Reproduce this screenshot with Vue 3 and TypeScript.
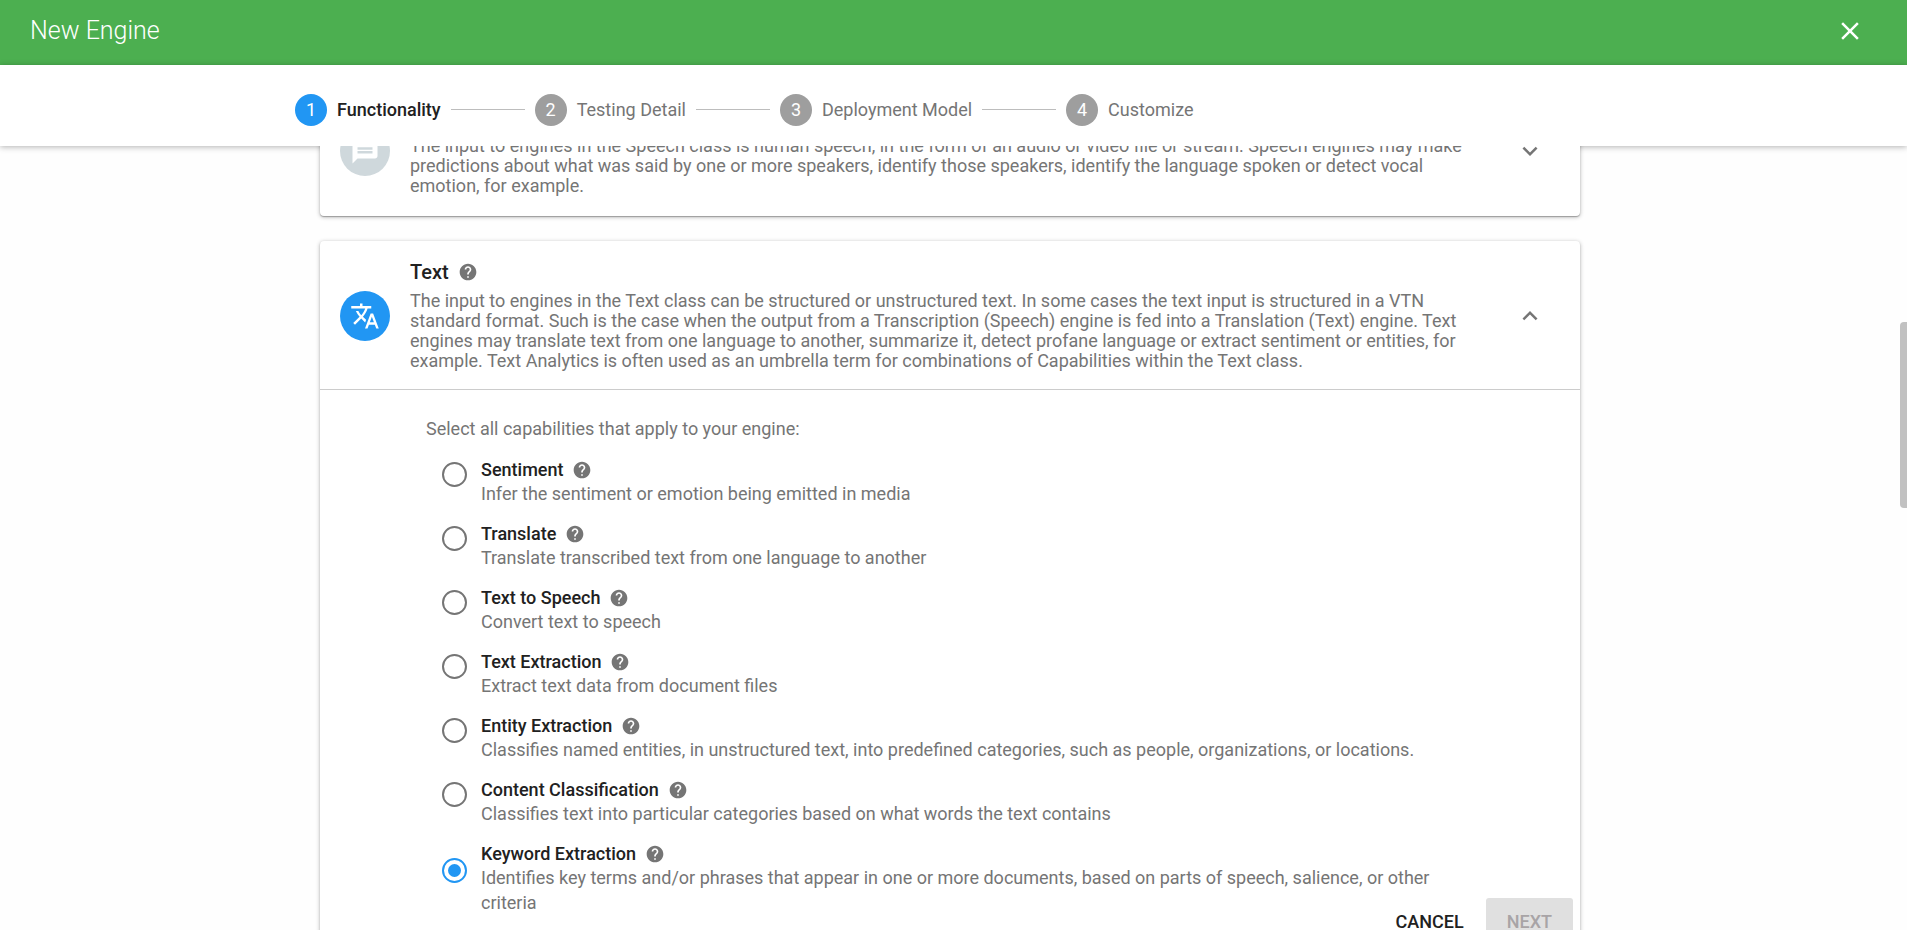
<script setup lang="ts">
import { onMounted, ref } from 'vue'

interface Capability {
  id: string
  name: string
  description: string
}

const steps: string[] = ['Functionality', 'Testing Detail', 'Deployment Model', 'Customize']
const activeStep = 0

const capabilities: Capability[] = [
  { id: 'sentiment', name: 'Sentiment', description: 'Infer the sentiment or emotion being emitted in media' },
  { id: 'translate', name: 'Translate', description: 'Translate transcribed text from one language to another' },
  { id: 'tts', name: 'Text to Speech', description: 'Convert text to speech' },
  { id: 'text-extraction', name: 'Text Extraction', description: 'Extract text data from document files' },
  {
    id: 'entity-extraction',
    name: 'Entity Extraction',
    description:
      'Classifies named entities, in unstructured text, into predefined categories, such as people, organizations, or locations.',
  },
  {
    id: 'content-classification',
    name: 'Content Classification',
    description: 'Classifies text into particular categories based on what words the text contains',
  },
  {
    id: 'keyword-extraction',
    name: 'Keyword Extraction',
    description:
      'Identifies key terms and/or phrases that appear in one or more documents, based on parts of speech, salience, or other criteria',
  },
]

const selected = ref('keyword-extraction')
const scroller = ref<HTMLElement | null>(null)

const helpPath =
  'M12 2C6.48 2 2 6.48 2 12s4.48 10 10 10 10-4.48 10-10S17.52 2 12 2zm1 17h-2v-2h2v2zm2.07-7.75l-.9.92C13.45 12.9 13 13.5 13 15h-2v-.5c0-1.1.45-2.1 1.17-2.83l1.24-1.26c.37-.36.59-.86.59-1.41 0-1.1-.9-2-2-2s-2 .9-2 2H8c0-2.21 1.79-4 4-4s4 1.79 4 4c0 .88-.36 1.68-.93 2.25z'

onMounted(() => {
  if (scroller.value) scroller.value.scrollTop = 60
})
</script>

<template>
  <div class="page">
    <header class="topbar">
      <h1>New Engine</h1>
      <button type="button" class="icon-btn close" aria-label="Close">
        <svg viewBox="0 0 24 24" width="30" height="30"><path d="M19 6.41L17.59 5 12 10.59 6.41 5 5 6.41 10.59 12 5 17.59 6.41 19 12 13.41 17.59 19 19 17.59 13.41 12z" /></svg>
      </button>
    </header>

    <nav class="stepper" aria-label="Progress">
      <ol>
        <li v-for="(step, i) in steps" :key="step" :class="{ active: i === activeStep }">
          <span class="num">{{ i + 1 }}</span>
          <span class="step-label">{{ step }}</span>
        </li>
      </ol>
    </nav>

    <main class="body">
      <div ref="scroller" class="scroller">
        <div class="cards">
          <section class="card">
            <div class="card-head collapsed">
              <span class="avatar muted">
                <svg viewBox="0 0 24 24" width="30" height="30"><path d="M20 2H4c-1.1 0-2 .9-2 2v18l4-4h14c1.1 0 2-.9 2-2V4c0-1.1-.9-2-2-2zm-2 12H6v-2h12v2zm0-3H6V9h12v2zm0-3H6V6h12v2z" /></svg>
              </span>
              <div class="summary">
                <div class="title-row">
                  <h2>Speech</h2>
                  <button type="button" class="icon-btn" aria-label="About Speech">
                    <svg viewBox="0 0 24 24" width="20" height="20"><path :d="helpPath" /></svg>
                  </button>
                </div>
                <p>The input to engines in the Speech class is human speech, in the form of an audio or video file or stream. Speech engines may make predictions about what was said by one or more speakers, identify those speakers, identify the language spoken or detect vocal emotion, for example.</p>
              </div>
              <button type="button" class="icon-btn" aria-label="Expand Speech" aria-expanded="false">
                <svg viewBox="0 0 24 24" width="30" height="30"><path d="M16.59 8.59L12 13.17 7.41 8.59 6 10l6 6 6-6z" /></svg>
              </button>
            </div>
          </section>

          <section class="card">
            <div class="card-head">
              <span class="avatar">
                <svg viewBox="0 0 24 24" width="30" height="30"><path d="M12.87 15.07l-2.54-2.51.03-.03c1.74-1.94 2.98-4.17 3.71-6.53H17V4h-7V2H8v2H1v1.99h11.17C11.5 7.92 10.44 9.75 9 11.35 8.07 10.32 7.3 9.19 6.69 8h-2c.73 1.63 1.73 3.17 2.98 4.56l-5.09 5.02L4 19l5-5 3.11 3.11.76-2.04zM18.5 10h-2L12 22h2l1.12-3h4.75L21 22h2l-4.5-12zm-2.62 7l1.62-4.33L19.12 17h-3.24z" /></svg>
              </span>
              <div class="summary">
                <div class="title-row">
                  <h2>Text</h2>
                  <button type="button" class="icon-btn" aria-label="About Text">
                    <svg viewBox="0 0 24 24" width="20" height="20"><path :d="helpPath" /></svg>
                  </button>
                </div>
                <p>The input to engines in the Text class can be structured or unstructured text. In some cases the text input is structured in a VTN standard format. Such is the case when the output from a Transcription (Speech) engine is fed into a Translation (Text) engine. Text engines may translate text from one language to another, summarize it, detect profane language or extract sentiment or entities, for example. Text Analytics is often used as an umbrella term for combinations of Capabilities within the Text class.</p>
              </div>
              <button type="button" class="icon-btn" aria-label="Collapse Text" aria-expanded="true">
                <svg viewBox="0 0 24 24" width="30" height="30"><path d="M12 8l-6 6 1.41 1.41L12 10.83l4.59 4.58L18 14z" /></svg>
              </button>
            </div>

            <fieldset class="options">
              <legend>Select all capabilities that apply to your engine:</legend>
              <div v-for="c in capabilities" :key="c.id" class="option">
                <input :id="c.id" v-model="selected" type="radio" name="capability" :value="c.id" :aria-describedby="c.id + '-desc'" />
                <div class="option-text">
                  <div class="option-title">
                    <label :for="c.id">{{ c.name }}</label>
                    <button type="button" class="icon-btn" :aria-label="'About ' + c.name">
                      <svg viewBox="0 0 24 24" width="20" height="20"><path :d="helpPath" /></svg>
                    </button>
                  </div>
                  <p :id="c.id + '-desc'">{{ c.description }}</p>
                </div>
              </div>
            </fieldset>
          </section>
        </div>
      </div>

      <div class="actions-layer">
        <div class="actions">
          <button type="button" class="btn">CANCEL</button>
          <button type="button" class="btn next" disabled>NEXT</button>
        </div>
      </div>
      <span class="thumb" aria-hidden="true"></span>
    </main>
  </div>
</template>

<style>
body {
  margin: 0;
  background: #fff;
}
</style>

<style scoped>
.page {
  display: flex;
  flex-direction: column;
  height: 100vh;
  overflow: hidden;
  background: #fefefe;
  color: #212121;
  font-family: Roboto, "Liberation Sans", sans-serif;
  font-size: 18px;
}

h1, h2, p, ol {
  margin: 0;
  padding: 0;
  font-weight: 400;
}

svg {
  display: block;
  fill: currentColor;
}

button {
  font: inherit;
  border: 0;
  cursor: pointer;
}

.icon-btn {
  display: flex;
  padding: 0;
  background: none;
  color: #757575;
}

.topbar {
  flex: none;
  display: flex;
  align-items: center;
  justify-content: space-between;
  box-sizing: border-box;
  height: 65px;
  padding: 0 42px 4px 30px;
  background: #4caf50;
  color: #fff;
}

.topbar h1 {
  font-size: 25px;
  font-weight: 300;
  line-height: 30px;
}

.close {
  color: #fff;
}

.stepper {
  flex: none;
  display: flex;
  align-items: center;
  height: 81px;
  padding: 0 295px;
  background: #fff;
  box-shadow: 0 1px 6px rgba(0, 0, 0, 0.3);
}

.stepper ol {
  display: flex;
  align-items: center;
  padding-top: 8px;
  list-style: none;
}

.stepper li {
  display: flex;
  align-items: center;
  gap: 10px;
  color: #757575;
}

.stepper li + li::before {
  content: "";
  width: 74px;
  height: 1px;
  margin-left: 10px;
  background: #bdbdbd;
}

.num {
  width: 32px;
  height: 32px;
  border-radius: 50%;
  background: #9e9e9e;
  color: #fff;
  font-size: 18px;
  line-height: 32px;
  text-align: center;
}

.active .num {
  background: #2196f3;
}

.active .step-label {
  color: #212121;
  font-weight: 500;
}

.body {
  position: relative;
  flex: 1;
  min-height: 0;
}

.scroller {
  height: 100%;
  padding: 0 327px 0 320px;
  box-sizing: border-box;
  overflow-y: auto;
  scrollbar-width: none;
}

.cards {
  display: flex;
  flex-direction: column;
  gap: 25px;
}

.card {
  border-radius: 4px;
  background: #fff;
  box-shadow: 0 1px 4px rgba(0, 0, 0, 0.3), 0 1px 1px rgba(0, 0, 0, 0.25);
}

.card-head {
  display: flex;
  align-items: center;
  gap: 20px;
  padding: 20px 35px 18px 20px;
}

.card-head.collapsed {
  padding-bottom: 20px;
}

.avatar {
  flex: none;
  display: grid;
  place-items: center;
  width: 50px;
  height: 50px;
  border-radius: 50%;
  background: #2196f3;
  color: #fff;
}

.avatar.muted {
  background: #cfd8dc;
}

.summary {
  flex: 1;
  margin-right: 25px;
}

.title-row,
.option-title {
  display: flex;
  align-items: center;
  gap: 9px;
}

.title-row h2 {
  font-size: 20px;
  font-weight: 500;
  line-height: 22px;
}

.title-row {
  margin-bottom: 8px;
}

.summary p {
  color: #757575;
  line-height: 20px;
}

.options {
  display: flex;
  flex-direction: column;
  gap: 16px;
  margin: 0;
  padding: 26px 120px 80px 106px;
  border: 0;
  border-top: 1px solid #ccc;
}

.options legend {
  float: left;
  padding: 0;
  color: #757575;
  line-height: 26px;
}

.option {
  display: flex;
  align-items: center;
  gap: 14px;
  padding-left: 16px;
}

.option input {
  flex: none;
  display: grid;
  place-items: center;
  box-sizing: border-box;
  width: 25px;
  height: 25px;
  margin: 0 0 16px;
  border: 2px solid #757575;
  border-radius: 50%;
  background: #fff;
  appearance: none;
}

.option input:checked {
  border-color: #2196f3;
}

.option input:checked::before {
  content: "";
  width: 13px;
  height: 13px;
  border-radius: 50%;
  background: #2196f3;
}

.option-title {
  height: 23px;
}

.option-title label {
  font-weight: 500;
}

.option-text p {
  color: #757575;
  line-height: 25px;
}

.actions-layer {
  position: absolute;
  inset: auto 327px -14px 320px;
  display: flex;
  justify-content: flex-end;
  padding-right: 7px;
}

.actions {
  display: flex;
  gap: 12px;
}

.btn {
  height: 46px;
  padding: 0 10px;
  border-radius: 3px;
  background: #fff;
  color: #212121;
  font-weight: 500;
}

.btn.next {
  padding: 0 21px;
  background: #e0e0e0;
  color: #a8a4a6;
  cursor: default;
}

.thumb {
  position: absolute;
  top: 176px;
  right: 0;
  width: 7px;
  height: 186px;
  border-radius: 4px 0 0 4px;
  background: #c1c1c1;
}
</style>
